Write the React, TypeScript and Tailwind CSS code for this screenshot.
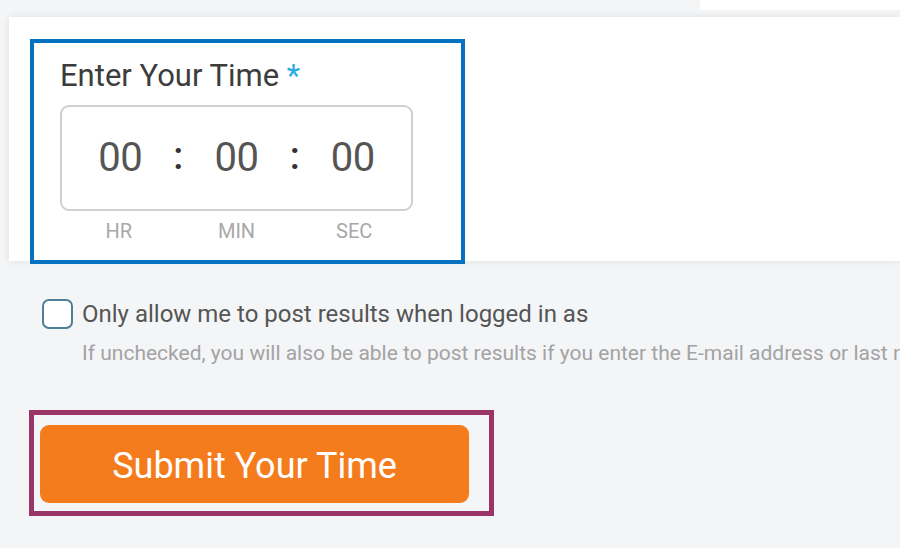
import React, { useState } from 'react'

const font = { fontFamily: 'Roboto, "Noto Sans", sans-serif' }

function TimeField({ value }: { value: string }) {
  return (
    <div className="flex-1 flex justify-center items-center text-[40px] leading-none text-[#555] tracking-[-0.5px]">
      {value}
    </div>
  )
}

function Colon() {
  return (
    <div className="w-0 flex justify-center items-center text-[38px] font-medium leading-none text-[#333] pb-[4px]">
      :
    </div>
  )
}

export default function App() {
  const [checked, setChecked] = useState(false)

  return (
    <div className="w-[900px] h-[548px] overflow-hidden bg-[#f4f5f7]" style={font}>
      <div className="h-[10px] flex justify-end">
        <div className="w-[200px] bg-white" />
      </div>

      <div className="mt-[7px] ml-[9px] h-[244px] bg-white shadow-[0_0_8px_rgba(0,0,0,0.09)] pt-[22px] pl-[21px]">
        <div className="w-[435px] h-[225px] border-4 border-[#0571c1] pl-[26px] pt-[15px]">
          <div className="text-[31px] leading-[36px] text-[#3c3c3c]">
            Enter Your Time <span className="text-[#29abe2]">*</span>
          </div>
          <div className="mt-[11px] w-[353px] h-[106px] border-2 border-[#cfcfcf] rounded-[9px] flex">
            <TimeField value="00" />
            <Colon />
            <TimeField value="00" />
            <Colon />
            <TimeField value="00" />
          </div>
          <div className="w-[353px] flex mt-[8px] text-[20px] leading-[24px] text-[#a8a8a8]">
            <div className="flex-1 text-center">HR</div>
            <div className="flex-1 text-center">MIN</div>
            <div className="flex-1 text-center">SEC</div>
          </div>
        </div>
      </div>

      <div className="mt-[38px] ml-[42px] flex items-start gap-[9px]">
        <button
          onClick={() => setChecked(!checked)}
          className="w-[31px] h-[30px] shrink-0 rounded-[7px] border-2 border-[#4f7f96] bg-white"
        />
        <div className="pt-[1px] min-w-0">
          <div className="text-[24px] leading-[28px] text-[#555] whitespace-nowrap">
            Only allow me to post results when logged in as
          </div>
          <div className="mt-[13px] text-[21px] leading-[24px] text-[#a3a3a3] whitespace-nowrap">
            If unchecked, you will also be able to post results if you enter the E-mail address or last name
          </div>
        </div>
      </div>

      <div className="mt-[45px] ml-[29px] w-[465px] h-[106px] border-[5px] border-[#9c3567] pt-[10px] pl-[6px]">
        <button className="w-[429px] h-[78px] rounded-[9px] bg-[#f57c1c] text-white text-[36px] leading-none pt-[3px]">
          Submit Your Time
        </button>
      </div>
    </div>
  )
}
